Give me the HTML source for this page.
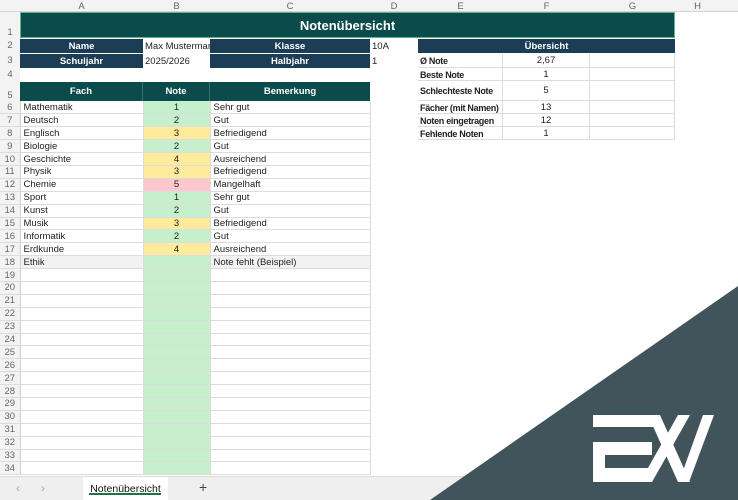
<!DOCTYPE html><html><head><meta charset="utf-8"><style>
*{margin:0;padding:0;box-sizing:border-box}
body{width:738px;height:500px;overflow:hidden;background:#fff;font-family:"Liberation Sans",sans-serif;font-size:9.5px;color:#222;position:relative}
.a{position:absolute;display:flex;align-items:center;white-space:nowrap;overflow:hidden}
.ctr{justify-content:center}
.h{color:#fff;font-weight:bold}
.t{background:#0b4b4b}.n{background:#1c3d56}
.rh{left:0;width:20px;justify-content:center;color:#666;background:#f3f3f3;font-size:9.5px}
table{position:absolute;left:0;top:101px;border-collapse:collapse;table-layout:fixed}
td{height:12.9px;padding:0 0 0 3px;border-bottom:1px solid #dcdcdc;border-right:1px solid #dcdcdc;font-size:9.5px;line-height:11px;white-space:nowrap;overflow:hidden}
td.r{background:#f3f3f3;color:#666;text-align:center;padding:0;border-right:1px solid #d0d0d0}
td.b{text-align:center;padding:0;background:#c6efce}
.y{background:#ffeb9c!important}.p{background:#ffc7ce!important}
.g{background:#f2f2f2}
.ov{border-bottom:1px solid #dcdcdc;border-right:1px solid #dcdcdc}
.lb{font-size:9px;letter-spacing:-0.3px;overflow:visible;font-weight:bold;padding-left:2px}
</style></head><body>
<div class="a" style="left:0;top:0;width:738px;height:12px;background:#f3f3f3;border-bottom:1px solid #d5d5d5"></div>
<div class="a ctr" style="left:20px;top:0;width:123px;height:12px;color:#666">A</div>
<div class="a ctr" style="left:143px;top:0;width:67px;height:12px;color:#666">B</div>
<div class="a ctr" style="left:210px;top:0;width:160px;height:12px;color:#666">C</div>
<div class="a ctr" style="left:370px;top:0;width:48px;height:12px;color:#666">D</div>
<div class="a ctr" style="left:418px;top:0;width:85px;height:12px;color:#666">E</div>
<div class="a ctr" style="left:503px;top:0;width:87px;height:12px;color:#666">F</div>
<div class="a ctr" style="left:590px;top:0;width:85px;height:12px;color:#666">G</div>
<div class="a ctr" style="left:675px;top:0;width:45px;height:12px;color:#666">H</div>
<div class="a rh" style="top:12px;height:26px;align-items:flex-end">1</div>
<div class="a rh" style="top:38px;height:15px">2</div>
<div class="a rh" style="top:53px;height:15px">3</div>
<div class="a rh" style="top:68px;height:13px">4</div>
<div class="a rh" style="top:81px;height:20px;align-items:flex-end">5</div>
<div class="a ctr h t" style="left:20px;top:12px;width:655px;height:26px;font-size:13px;border:1px solid #5fb58a">Notenübersicht</div>
<div class="a ctr h n" style="left:20px;top:39px;width:123px;height:14px">Name</div>
<div class="a" style="left:145px;top:39px;width:65px;height:14px">Max Mustermann</div>
<div class="a ctr h n" style="left:210px;top:39px;width:160px;height:14px">Klasse</div>
<div class="a" style="left:372px;top:39px;width:46px;height:14px">10A</div>
<div class="a ctr h n" style="left:418px;top:39px;width:257px;height:14px">Übersicht</div>
<div class="a ctr h n" style="left:20px;top:54px;width:123px;height:14px">Schuljahr</div>
<div class="a" style="left:145px;top:54px;width:65px;height:14px">2025/2026</div>
<div class="a ctr h n" style="left:210px;top:54px;width:160px;height:14px">Halbjahr</div>
<div class="a" style="left:372px;top:54px;width:46px;height:14px">1</div>
<div class="a ctr h t" style="left:20px;top:82px;width:123px;height:19px;border-right:1px solid #3a7070">Fach</div>
<div class="a ctr h t" style="left:143px;top:82px;width:67px;height:19px;border-right:1px solid #3a7070">Note</div>
<div class="a ctr h t" style="left:210px;top:82px;width:160px;height:19px">Bemerkung</div>
<div class="a ov" style="left:503px;top:54px;width:87px;height:14px"></div>
<div class="a ctr ov" style="left:503px;top:54px;width:87px;height:14px">2,67</div>
<div class="a ov" style="left:590px;top:54px;width:85px;height:14px"></div>
<div class="a ov" style="left:418px;top:54px;width:85px;height:14px"></div>
<div class="a lb" style="left:418px;top:54px;height:14px">Ø Note</div>
<div class="a ov" style="left:418px;top:68px;width:85px;height:13px"></div>
<div class="a lb" style="left:418px;top:68px;height:13px">Beste Note</div>
<div class="a ctr ov" style="left:503px;top:68px;width:87px;height:13px">1</div>
<div class="a ov" style="left:590px;top:68px;width:85px;height:13px"></div>
<div class="a ov" style="left:418px;top:81px;width:85px;height:20px"></div>
<div class="a lb" style="left:418px;top:81px;height:20px">Schlechteste Note</div>
<div class="a ctr ov" style="left:503px;top:81px;width:87px;height:20px">5</div>
<div class="a ov" style="left:590px;top:81px;width:85px;height:20px"></div>
<div class="a ov" style="left:418px;top:101px;width:85px;height:13px"></div>
<div class="a lb" style="left:418px;top:101px;height:13px">Fächer (mit Namen)</div>
<div class="a ctr ov" style="left:503px;top:101px;width:87px;height:13px">13</div>
<div class="a ov" style="left:590px;top:101px;width:85px;height:13px"></div>
<div class="a ov" style="left:418px;top:114px;width:85px;height:13px"></div>
<div class="a lb" style="left:418px;top:114px;height:13px">Noten eingetragen</div>
<div class="a ctr ov" style="left:503px;top:114px;width:87px;height:13px">12</div>
<div class="a ov" style="left:590px;top:114px;width:85px;height:13px"></div>
<div class="a ov" style="left:418px;top:127px;width:85px;height:13px"></div>
<div class="a lb" style="left:418px;top:127px;height:13px">Fehlende Noten</div>
<div class="a ctr ov" style="left:503px;top:127px;width:87px;height:13px">1</div>
<div class="a ov" style="left:590px;top:127px;width:85px;height:13px"></div>
<table>
<colgroup><col style="width:20px"><col style="width:123px"><col style="width:67px"><col style="width:160px"></colgroup>
<tr><td class="r">6</td><td>Mathematik</td><td class="b">1</td><td>Sehr gut</td></tr>
<tr><td class="r">7</td><td>Deutsch</td><td class="b">2</td><td>Gut</td></tr>
<tr><td class="r">8</td><td>Englisch</td><td class="b y">3</td><td>Befriedigend</td></tr>
<tr><td class="r">9</td><td>Biologie</td><td class="b">2</td><td>Gut</td></tr>
<tr><td class="r">10</td><td>Geschichte</td><td class="b y">4</td><td>Ausreichend</td></tr>
<tr><td class="r">11</td><td>Physik</td><td class="b y">3</td><td>Befriedigend</td></tr>
<tr><td class="r">12</td><td>Chemie</td><td class="b p">5</td><td>Mangelhaft</td></tr>
<tr><td class="r">13</td><td>Sport</td><td class="b">1</td><td>Sehr gut</td></tr>
<tr><td class="r">14</td><td>Kunst</td><td class="b">2</td><td>Gut</td></tr>
<tr><td class="r">15</td><td>Musik</td><td class="b y">3</td><td>Befriedigend</td></tr>
<tr><td class="r">16</td><td>Informatik</td><td class="b">2</td><td>Gut</td></tr>
<tr><td class="r">17</td><td>Erdkunde</td><td class="b y">4</td><td>Ausreichend</td></tr>
<tr><td class="r">18</td><td class="g">Ethik</td><td class="b"></td><td class="g">Note fehlt (Beispiel)</td></tr>
<tr><td class="r">19</td><td></td><td class="b"></td><td></td></tr>
<tr><td class="r">20</td><td></td><td class="b"></td><td></td></tr>
<tr><td class="r">21</td><td></td><td class="b"></td><td></td></tr>
<tr><td class="r">22</td><td></td><td class="b"></td><td></td></tr>
<tr><td class="r">23</td><td></td><td class="b"></td><td></td></tr>
<tr><td class="r">24</td><td></td><td class="b"></td><td></td></tr>
<tr><td class="r">25</td><td></td><td class="b"></td><td></td></tr>
<tr><td class="r">26</td><td></td><td class="b"></td><td></td></tr>
<tr><td class="r">27</td><td></td><td class="b"></td><td></td></tr>
<tr><td class="r">28</td><td></td><td class="b"></td><td></td></tr>
<tr><td class="r">29</td><td></td><td class="b"></td><td></td></tr>
<tr><td class="r">30</td><td></td><td class="b"></td><td></td></tr>
<tr><td class="r">31</td><td></td><td class="b"></td><td></td></tr>
<tr><td class="r">32</td><td></td><td class="b"></td><td></td></tr>
<tr><td class="r">33</td><td></td><td class="b"></td><td></td></tr>
<tr><td class="r">34</td><td></td><td class="b"></td><td></td></tr>
</table>
<div class="a" style="left:0;top:476px;width:738px;height:24px;background:#efefef;border-top:1px solid #ddd"></div>
<div class="a" style="left:16px;top:480px;height:16px;color:#aaa;font-size:12px">‹</div>
<div class="a" style="left:41px;top:480px;height:16px;color:#aaa;font-size:12px">›</div>
<div class="a ctr" style="left:83px;top:477px;width:85px;height:23px;background:#fff;font-size:10.5px;color:#111">Notenübersicht</div>
<div class="a" style="left:89px;top:493px;width:72px;height:2px;background:#1e7145"></div>
<div class="a" style="left:199px;top:479px;height:16px;font-size:14px;color:#444">+</div>
<svg style="position:absolute;left:0;top:0" width="738" height="500">
<polygon points="738,286 738,500 430,500" fill="#42545b"/>
<g fill="#fff">
<rect x="593" y="415" width="64" height="12"/>
<rect x="593" y="442" width="59" height="13"/>
<rect x="593" y="442" width="12" height="40"/>
<rect x="593" y="468" width="59" height="14"/>
<polygon points="648,415 660,415 690,482 678,482"/>
<polygon points="640,482 652,482 690,415 678,415"/>
<polygon points="679,482 689,482 714,415 703,415"/>
</g>
</svg>
</body></html>
